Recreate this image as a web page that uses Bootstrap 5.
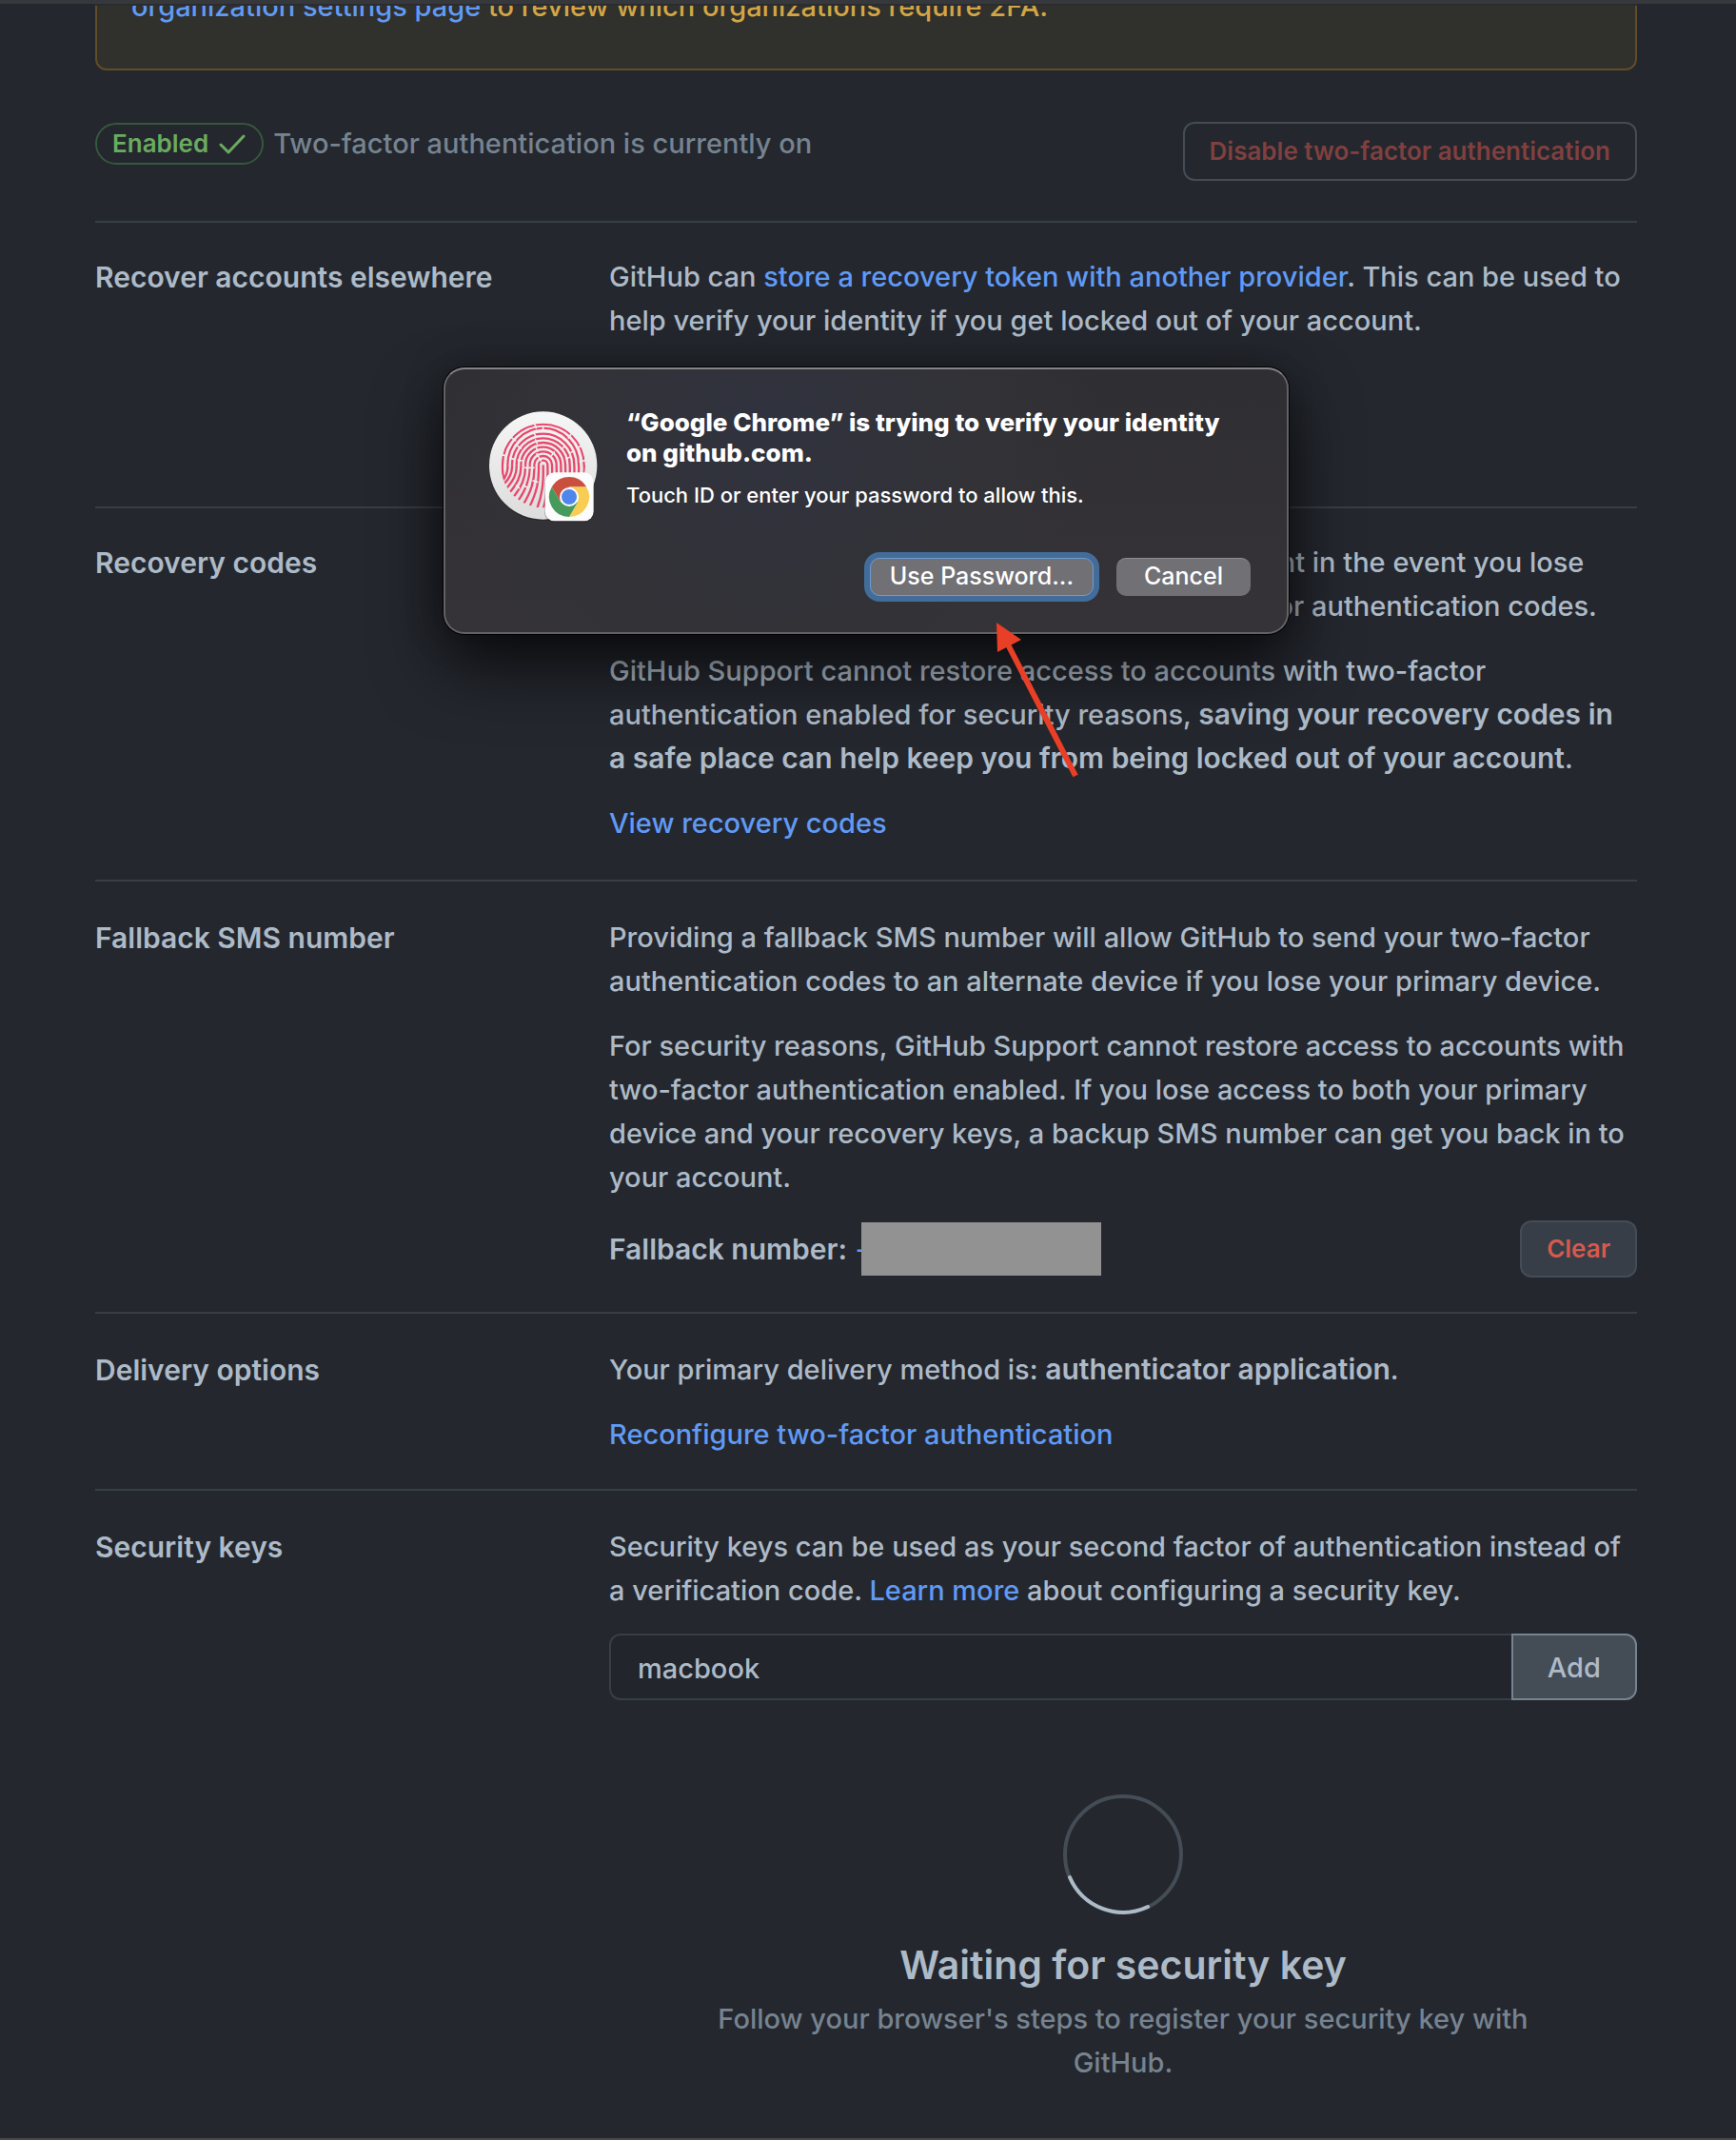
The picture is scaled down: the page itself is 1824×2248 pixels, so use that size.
<!DOCTYPE html>
<html lang="en">
<head>
<meta charset="utf-8">
<meta name="viewport" content="width=device-width, initial-scale=1">
<title>Two-factor authentication</title>
<link href="https://cdn.jsdelivr.net/npm/bootstrap@5.3.0/dist/css/bootstrap.min.css" rel="stylesheet">
<style>
  :root { --line: #373e47; --text: #adbac7; --dim: #768390; --blue: #609af5; }
  body { background: #24272e; color: var(--text); font-family: Inter, "Liberation Sans", sans-serif; font-size: 29px; font-weight: 450; line-height: 46px; }
  a { color: var(--blue); text-decoration: none; }
  p { margin-bottom: 22px; }
  b, .term { font-weight: 600; font-size: 30px; line-height: 44px; }
  .page { min-height: 100vh; border-top: 4px solid #37383c; border-bottom: 2px solid #47484c; }
  .sheet { padding: 0 104px 0 100px; }
  .flash-clip { height: 70px; border-top: 2px solid #2b2c2f; }
  .flash { background: #30302c; border: 2px solid #634c27; border-radius: 12px; padding: 36px 36px 42px; color: #d2a546; }
  .status { padding: 54px 0 42px; }
  .state { color: #6aab60; border: 2px solid #36583c; border-radius: 22px; font-size: 26px; font-weight: 600; line-height: 40px; padding: 0 16px; margin-right: 10px; }
  .muted-line { color: var(--dim); }
  .btn { font-weight: 600; font-size: 26px; line-height: 40px; padding: 9px 26px; border-width: 2px; border-radius: 12px; }
  .btn-off, .btn-off:hover { color: #80403f; border-color: #444c56; }
  .btn-clear, .btn-clear:hover { color: #d8594d; background: #373e47; border-color: #444c56; padding-top: 8px; padding-bottom: 8px; }
  .option { border-top: 2px solid var(--line); padding: 36px 0 34px; }
  .option-recovery { padding: 34px 0 36px; }
  .option h2 { font-size: 30px; line-height: 46px; font-weight: 600; margin: 0; }
  .tall { min-height: 300px; }
  .number-row { margin-bottom: 2px; }
  .redacted { width: 252px; height: 56px; background: #929292; margin-left: -12px; z-index: 1; }
  .keybox .form-control { height: 70px; background: #22252c; color: var(--text); border: 2px solid var(--line); border-right: 0; border-radius: 12px; font-size: 29px; font-weight: 450; padding: 2px 28px 0; }
  .btn-add, .btn-add:hover { background: #444c56; border-color: #768390; color: var(--text); font-size: 29px; font-weight: 500; padding: 2px 36px 0; }
  .waiting { padding: 98px 90px 0; }
  .waiting h3 { font-size: 41px; line-height: 60px; font-weight: 600; margin: 22px 0 4px; }
  .sheet-dialog { top: 382px; left: 0; right: 4px; width: 888px; min-height: 280px; margin: 0 auto; padding: 40px 38px 38px 32px; color: #fff;
    background: radial-gradient(circle at 38% 22%, #30323e 0, #323237 36%, transparent 60%), linear-gradient(#2f2e33, #353338);
    border: 2px solid #626165; border-top-color: #858487; border-radius: 22px; box-shadow: 0 0 0 1px #000, 0 34px 70px rgba(0,0,0,.68), 0 0 40px rgba(0,0,0,.3); }
  .sheet-dialog h1 { font-size: 26px; line-height: 32px; font-weight: 800; margin: 0 0 14px; }
  .sheet-dialog p { font-size: 22px; line-height: 28px; margin: 0; font-weight: 500; }
  .touch-icon { width: 140px; height: 122px; margin-right: 18px; flex: none; }
  .btn-mac, .btn-mac:hover { color: #fff; background: #717075; border: 0; border-top: 1px solid #8f8e93; border-radius: 10px; font-size: 25px; font-weight: 450; line-height: 37px; padding: 0 29px 2px; }
  .btn-key, .btn-key:hover { border: 1px solid #6f9ccf; box-shadow: 0 0 0 6px #426d9a; line-height: 36px; padding: 0 20px 2px; }
  .pointer { left: 571px; top: 261px; width: 110px; height: 180px; pointer-events: none; }
</style>
<script src="https://cdn.jsdelivr.net/npm/bootstrap@5.3.0/dist/js/bootstrap.bundle.min.js"></script>
</head>
<body>
<div class="page position-relative">
  <main class="sheet">
    <div class="flash-clip d-flex align-items-end overflow-hidden">
      <div class="flash w-100"><a href="#">organization settings page</a> to review which organizations require 2FA.</div>
    </div>

    <div class="status d-flex justify-content-between align-items-start">
      <div class="d-flex align-items-center">
        <span class="state d-inline-flex align-items-center">Enabled
          <svg class="ms-2" width="32" height="32" viewBox="0 0 32 32" fill="none" stroke="#6aab60" stroke-width="3" stroke-linecap="round" stroke-linejoin="round" aria-hidden="true"><path d="M5 17l8 8L29 8"/></svg>
        </span>
        <span class="muted-line">Two-factor authentication is currently on</span>
      </div>
      <button class="btn btn-off" type="button">Disable two-factor authentication</button>
    </div>

    <section class="option option-recovery tall row g-0">
      <div class="col-4"><h2>Recover accounts elsewhere</h2></div>
      <div class="col-8"><p>GitHub can <a href="#">store a recovery token with another provider</a>. This can be used to help verify your identity if you get locked out of your account.</p></div>
    </section>

    <section class="option option-recovery row g-0">
      <div class="col-4"><h2>Recovery codes</h2></div>
      <div class="col-8">
        <p>Recovery codes can be used to access your account in the event you lose access to your device and cannot receive two-factor authentication codes.</p>
        <p>GitHub Support cannot restore access to accounts with two-factor authentication enabled for security reasons, <b>saving your recovery codes in a&nbsp;safe place can help keep you from being locked out of your account</b>.</p>
        <a href="#">View recovery codes</a>
      </div>
    </section>

    <section class="option row g-0">
      <div class="col-4"><h2>Fallback SMS number</h2></div>
      <div class="col-8">
        <p>Providing a fallback SMS number will allow GitHub to send your two-factor authentication codes to an alternate device if you lose your primary device.</p>
        <p>For security reasons, GitHub Support cannot restore access to accounts with two-factor authentication enabled. If you lose access to both your primary device and your recovery keys, a backup SMS number can get you back in to your account.</p>
        <div class="number-row d-flex align-items-center">
          <span class="term">Fallback number:</span>
          <a class="ms-2" href="#">+</a>
          <span class="redacted"></span>
          <button class="btn btn-clear ms-auto" type="button">Clear</button>
        </div>
      </div>
    </section>

    <section class="option row g-0">
      <div class="col-4"><h2>Delivery options</h2></div>
      <div class="col-8">
        <p>Your primary delivery method is: <b>authenticator application</b>.</p>
        <a href="#">Reconfigure two-factor authentication</a>
      </div>
    </section>

    <section class="option row g-0">
      <div class="col-4"><h2>Security keys</h2></div>
      <div class="col-8">
        <p>Security keys can be used as your second factor of authentication instead of a&nbsp;verification code. <a href="#">Learn more</a> about configuring a security key.</p>
        <form class="keybox">
          <label class="visually-hidden" for="keyname">Security key nickname</label>
          <div class="input-group">
            <input class="form-control" id="keyname" type="text" value="macbook">
            <button class="btn btn-add" type="button">Add</button>
          </div>
        </form>
        <div class="waiting text-center">
          <svg class="d-block mx-auto" width="128" height="128" viewBox="0 0 128 128" fill="none" stroke-width="4" stroke-linecap="round" role="img" aria-label="Waiting">
            <circle cx="64" cy="64" r="61" stroke="#444c56"/>
            <path d="M8 88A61 61 0 0 0 90 119" stroke="#adbac7"/>
          </svg>
          <h3>Waiting for security key</h3>
          <p class="muted-line mb-0">Follow your browser's steps to register your security key with GitHub.</p>
        </div>
      </div>
    </section>
  </main>

  <div class="sheet-dialog position-absolute d-flex flex-column justify-content-between" role="dialog" aria-labelledby="ask">
    <div class="d-flex">
      <svg class="touch-icon" viewBox="0 54 420 366" aria-hidden="true">
        <defs>
          <linearGradient id="disc" x1="0" y1="0" x2="0" y2="1"><stop offset="0" stop-color="#f6f6f6"/><stop offset="1" stop-color="#dcdcdc"/></linearGradient>
          <clipPath id="pad"><circle cx="212" cy="237" r="133"/></clipPath>
        </defs>
        <circle cx="212" cy="241" r="170" fill="#1d1d20" opacity=".5"/>
        <circle cx="212" cy="237" r="170" fill="url(#disc)"/>
        <g clip-path="url(#pad)" fill="none" stroke="#e8476b" stroke-width="7">
          <path d="M212 235C214 290 210 330 190 380"/>
          <path d="M198 235A14 14 0 0 1 226 235C228 300 224 340 210 380M198 235C200 290 190 325 168 370"/>
          <path d="M184 235A28 28 0 0 1 240 235C242 300 238 340 225 380M184 235C186 285 174 320 148 362"/>
          <path d="M170 235A42 42 0 0 1 254 235C256 300 252 340 240 380M170 235C172 280 158 315 130 352"/>
          <path d="M156 235A56 56 0 0 1 268 235C270 300 266 340 255 380M156 235C158 275 144 305 114 342"/>
          <path d="M142 235A70 70 0 0 1 282 235C284 290 280 330 270 370M142 235C144 270 130 295 102 328"/>
          <path d="M128 235A84 84 0 0 1 296 235C298 280 294 310 286 350M128 235C130 265 118 285 94 312"/>
          <path d="M114 235A98 98 0 0 1 310 235C312 270 308 300 300 330M114 235C116 260 106 278 88 296"/>
          <path d="M100 235A112 116 0 0 1 324 235C326 260 322 285 316 305M100 235C102 255 96 270 84 285"/>
          <path d="M88 280C82 255 84 240 84 235A128 128 0 0 1 341 235C343 250 341 260 340 270"/>
        </g>
        <g stroke="#ededed" stroke-width="5" stroke-linecap="round">
          <path d="M185 105l5 14M113 150l12 8M78 202l15 4M300 138l-8 12M326 178l16-5M212 116l-1 14M182 132l6 12M132 176l10 7M188 156l5 12M107 214l14 3M133 220l13 2M155 244h28M190 180l5 12M247 195l-8 10M270 185l12-9M328 225l16-4M284 215l12-4M300 196l10-5M192 200l6 10M200 214l5 8M150 300l12 6M180 285l14 4M128 300l8 8"/>
        </g>
        <rect x="216" y="261" width="155" height="155" rx="31" fill="#151517" opacity=".25"/>
        <rect x="218" y="259" width="153" height="153" rx="30" fill="#fcfcfc"/>
        <g transform="translate(294 336)">
          <path fill="#c9503f" d="M-54.6-31.5A63 63 0 0 1 54.6-31.5H0L-27.3 15.75z"/>
          <path fill="#f7cd54" d="M54.6-31.5A63 63 0 0 1 0 63L27.3 15.75 0-31.5z"/>
          <path fill="#469a5b" d="M0 63A63 63 0 0 1-54.6-31.5L-27.3 15.75H27.3z"/>
          <circle r="30" fill="#fff"/><circle r="24" fill="#5086ec"/>
        </g>
      </svg>
      <div>
        <h1 id="ask">“Google Chrome” is trying to verify your identity<br>on github.com.</h1>
        <p>Touch ID or enter your password to allow this.</p>
      </div>
    </div>
    <div class="d-flex justify-content-end gap-4">
      <button class="btn btn-mac btn-key" type="button">Use Password...</button>
      <button class="btn btn-mac" type="button">Cancel</button>
    </div>
    <svg class="pointer position-absolute" viewBox="0 0 110 180" aria-hidden="true"><path d="M20 28L91 166" stroke="#e83f26" stroke-width="6"/><path d="M8 5L34 23L9 36z" fill="#e83f26"/></svg>
  </div>
</div>
</body>
</html>
